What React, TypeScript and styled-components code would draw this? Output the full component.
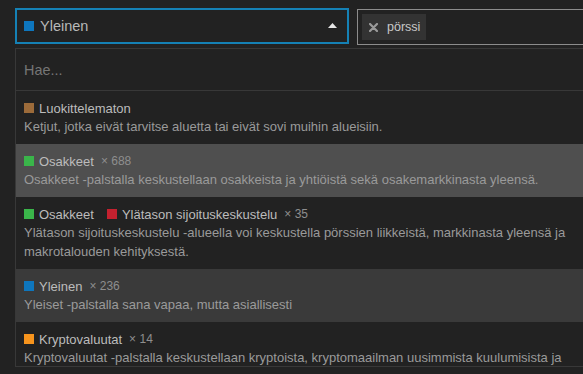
import * as React from 'react';
import styled, { createGlobalStyle } from 'styled-components';

const GlobalStyle = createGlobalStyle`
	html, body {
		margin: 0;
		background: #222222;
		overflow: hidden;
		font-family: "Liberation Sans", Arial, sans-serif;
	}
`;

interface ICategory {
	name: string;
	color: string;
}

interface IOption {
	badges: ICategory[];
	count?: number;
	description: string;
	state?: 'hover' | 'selected';
}

const options: IOption[] = [
	{
		badges: [{ name: 'Luokittelematon', color: '#9c6b3a' }],
		description: 'Ketjut, jotka eivät tarvitse aluetta tai eivät sovi muihin alueisiin.',
	},
	{
		badges: [{ name: 'Osakkeet', color: '#3ab54a' }],
		count: 688,
		description:
			'Osakkeet -palstalla keskustellaan osakkeista ja yhtiöistä sekä osakemarkkinasta yleensä.',
		state: 'hover',
	},
	{
		badges: [
			{ name: 'Osakkeet', color: '#3ab54a' },
			{ name: 'Ylätason sijoituskeskustelu', color: '#c4212f' },
		],
		count: 35,
		description:
			'Ylätason sijoituskeskustelu -alueella voi keskustella pörssien liikkeistä, markkinasta yleensä ja makrotalouden kehityksestä.',
	},
	{
		badges: [{ name: 'Yleinen', color: '#0e76bd' }],
		count: 236,
		description: 'Yleiset -palstalla sana vapaa, mutta asiallisesti',
		state: 'selected',
	},
	{
		badges: [{ name: 'Kryptovaluutat', color: '#f7941d' }],
		count: 14,
		description:
			'Kryptovaluutat -palstalla keskustellaan kryptoista, kryptomaailman uusimmista kuulumisista ja tapahtumista.',
	},
];

const App: React.FunctionComponent = () => {
	return (
		<Page>
			<GlobalStyle />
			<Bar>
				<Select>
					<Swatch color="#0e76bd" />
					<SelectLabel>Yleinen</SelectLabel>
					<Caret width="9" height="5" viewBox="0 0 9 5">
						<polygon points="0,5 4.5,0 9,5" fill="#e6e6e6" />
					</Caret>
				</Select>
				<TagBox>
					<Chip>
						<svg width="9" height="9" viewBox="0 0 9 9">
							<path d="M1 1 L8 8 M8 1 L1 8" stroke="#9a9a9a" strokeWidth="2.2" strokeLinecap="round" />
						</svg>
						<span>pörssi</span>
					</Chip>
				</TagBox>
			</Bar>
			<Panel>
				<Search placeholder="Hae..." />
				{options.map((o, i) => (
					<Row key={i} state={o.state}>
						<TitleLine>
							{o.badges.map(b => (
								<Badge key={b.name}>
									<Swatch color={b.color} />
									<span>{b.name}</span>
								</Badge>
							))}
							{o.count !== undefined && <Count>× {o.count}</Count>}
						</TitleLine>
						<Description>{o.description}</Description>
					</Row>
				))}
			</Panel>
		</Page>
	);
};

export default App;

const Page = styled.div`
	position: relative;
	height: 374px;
	padding: 8px 0 0 15px;
	box-sizing: border-box;
`;

const Bar = styled.div`
	display: flex;
	align-items: flex-start;
	gap: 8px;
`;

const Select = styled.div`
	width: 334px;
	height: 36px;
	flex: none;
	box-sizing: border-box;
	border: 2px solid #1581b5;
	display: flex;
	align-items: center;
	padding: 0 10px 0 7px;
`;

const Swatch = styled.span<{ color: string }>`
	width: 10px;
	height: 10px;
	flex: none;
	background: ${p => p.color};
`;

const SelectLabel = styled.span`
	margin-left: 6px;
	flex: 1;
	font-size: 14.5px;
	color: #b8b8b8;
`;

const Caret = styled.svg`
	display: block;
	margin-top: -2px;
`;

const TagBox = styled.div`
	margin-top: 1px;
	height: 36px;
	width: 300px;
	flex: none;
	box-sizing: border-box;
	border: 1px solid #8c8c8c;
	padding: 4px;
	display: flex;
`;

const Chip = styled.div`
	height: 26px;
	display: flex;
	align-items: center;
	gap: 9px;
	padding: 0 6px 0 7px;
	background: #333333;
	font-size: 12.5px;
	color: #c8c8c8;

	svg {
		display: block;
	}
`;

const Panel = styled.div`
	position: absolute;
	top: 48px;
	left: 15px;
	width: 583px;
	height: 319px;
	box-sizing: border-box;
	border: 1px solid #383838;
	background: #222222;
	overflow: hidden;
`;

const Search = styled.input`
	display: block;
	width: 100%;
	height: 42px;
	box-sizing: border-box;
	margin: 0;
	padding: 0 8px;
	border: none;
	border-bottom: 1px solid #383838;
	background: transparent;
	outline: none;
	font-family: inherit;
	font-size: 14.4px;
	color: #ccc;

	&::placeholder {
		color: #767676;
	}
`;

const Row = styled.div<{ state?: 'hover' | 'selected' }>`
	padding: 8px 8px;
	background: ${p => (p.state === 'hover' ? '#4f4f4f' : p.state === 'selected' ? '#3a3a3a' : 'transparent')};
`;

const TitleLine = styled.div`
	display: flex;
	align-items: center;
	height: 18px;
	font-size: 13px;
	color: #bcbcbc;
`;

const Badge = styled.span`
	display: flex;
	align-items: center;
	gap: 5px;

	& + & {
		margin-left: 13px;
	}
`;

const Count = styled.span`
	margin-left: 7px;
	font-size: 12px;
	color: #8e8e8e;
`;

const Description = styled.div`
	font-size: 13px;
	line-height: 19px;
	color: #9a9a9a;
`;
